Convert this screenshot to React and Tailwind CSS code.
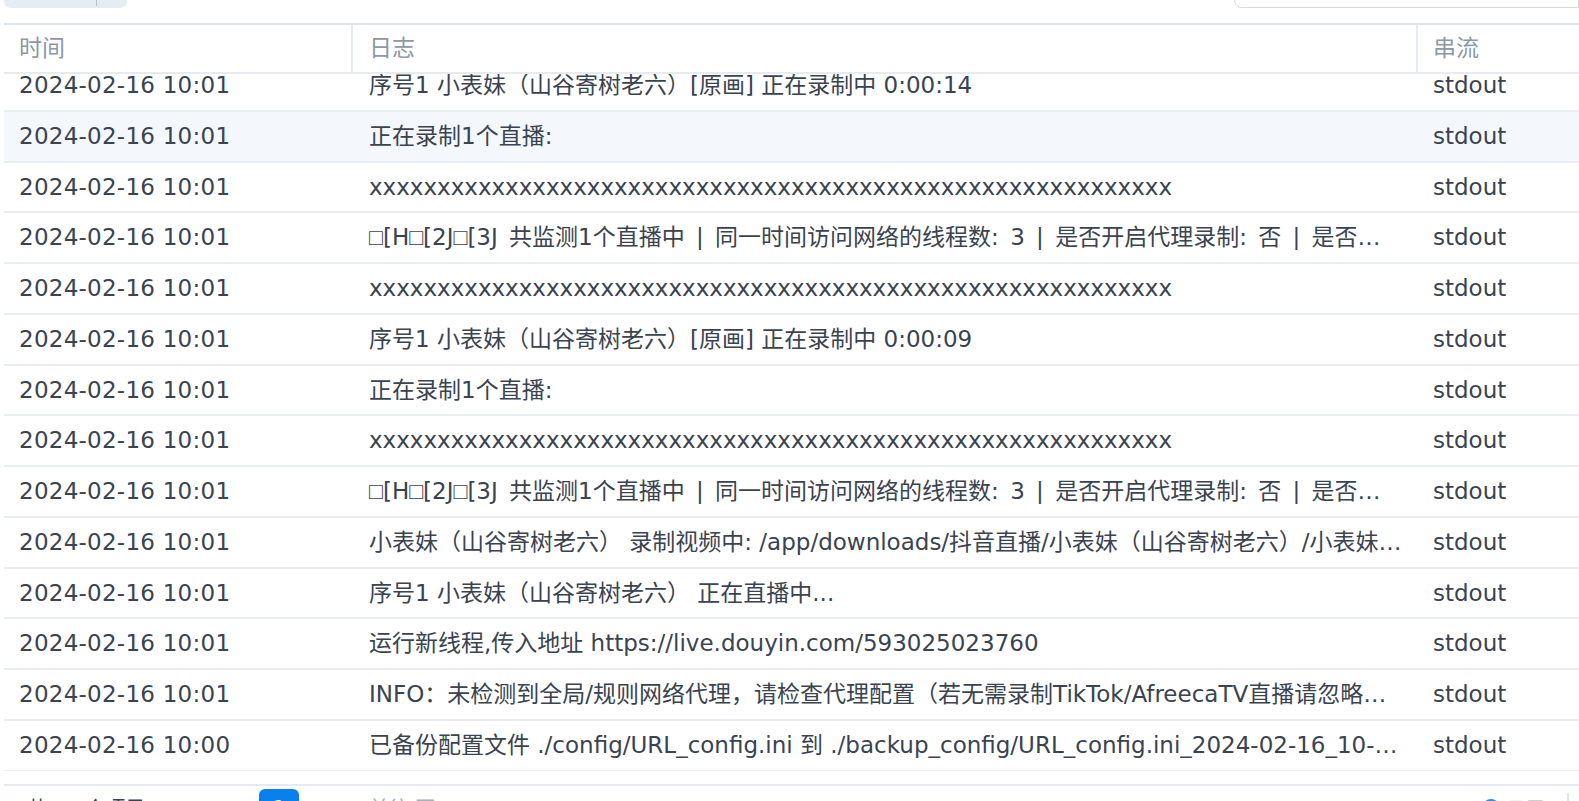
import React from 'react';

const xs = 'x'.repeat(59);

const rows = [
    { time: '2024-02-16 10:01', log: '序号1 小表妹（山谷寄树老六）[原画] 正在录制中 0:00:14' },
    { time: '2024-02-16 10:01', log: '正在录制1个直播:', hover: true },
    { time: '2024-02-16 10:01', log: xs },
    { time: '2024-02-16 10:01', log: '共监测1个直播中 | 同一时间访问网络的线程数: 3 | 是否开启代理录制: 否 | 是否开启推送通知: 否 | 录制分段开启: 否', esc: true },
    { time: '2024-02-16 10:01', log: xs },
    { time: '2024-02-16 10:01', log: '序号1 小表妹（山谷寄树老六）[原画] 正在录制中 0:00:09' },
    { time: '2024-02-16 10:01', log: '正在录制1个直播:' },
    { time: '2024-02-16 10:01', log: xs },
    { time: '2024-02-16 10:01', log: '共监测1个直播中 | 同一时间访问网络的线程数: 3 | 是否开启代理录制: 否 | 是否开启推送通知: 否 | 录制分段开启: 否', esc: true },
    { time: '2024-02-16 10:01', log: '小表妹（山谷寄树老六） 录制视频中: /app/downloads/抖音直播/小表妹（山谷寄树老六）/小表妹（山谷寄树老六）_2024-02-16_10-01-05.ts' },
    { time: '2024-02-16 10:01', log: '序号1 小表妹（山谷寄树老六） 正在直播中...' },
    { time: '2024-02-16 10:01', log: '运行新线程,传入地址 https://live.douyin.com/593025023760' },
    { time: '2024-02-16 10:01', log: 'INFO：未检测到全局/规则网络代理，请检查代理配置（若无需录制TikTok/AfreecaTV直播请忽略此条提示）' },
    { time: '2024-02-16 10:00', log: '已备份配置文件 ./config/URL_config.ini 到 ./backup_config/URL_config.ini_2024-02-16_10-00-58' },
];

const Box = () => <span className="font-['Liberation_Sans',sans-serif]">□</span>;

const EscPrefix = () => (
    <>
        <Box />[H<Box />[2J<Box />[3J{' '}
    </>
);

const App = () => {
    return (
        <div className="h-[801px] w-[1579px] overflow-hidden bg-white text-[23px] text-[#3a4350] font-['DejaVu_Sans','Noto_Sans_CJK_SC',sans-serif]">
            {/* toolbar, scrolled mostly out of view */}
            <div className="-mt-[24px] flex h-[32px] items-stretch justify-between pl-[4px]">
                <div className="flex w-[123px] rounded-b-[7px] bg-[#e6ecf4]">
                    <div className="w-[93px] border-r border-[#b9c3cf] mt-[18px] mb-[2px]"></div>
                    <div className="flex-1"></div>
                </div>
                <div className="w-[345px] rounded-bl-[8px] border border-[#d3dbe5] bg-white"></div>
            </div>

            <div className="mt-[15px] ml-[4px] border-t-2 border-[#dfe5ec]">
                {/* header */}
                <div className="flex h-[49px] border-b-2 border-[#e6ebf1] text-[#8c98a6]">
                    <div className="flex w-[349px] items-center border-r-2 border-[#e6ebf1] px-[15px]">时间</div>
                    <div className="flex w-[1065px] items-center border-r-2 border-[#e6ebf1] px-[16px]">日志</div>
                    <div className="flex flex-1 items-center px-[15px]">串流</div>
                </div>

                {/* body */}
                <div className="h-[697px] overflow-hidden">
                    <div className="-mt-[13px]">
                        {rows.map((r, i) => (
                            <div
                                key={i}
                                className={`flex h-[50.75px] items-center border-b-2 border-[#e9edf2] ${r.hover ? 'bg-[#f4f8fd]' : ''}`}
                            >
                                <div className="w-[349px] shrink-0 px-[15px] whitespace-nowrap tracking-[0.25px]">{r.time}</div>
                                <div className={`w-[1065px] shrink-0 px-[16px] truncate ${r.esc ? '[word-spacing:4px]' : ''}`}>
                                    {r.esc && <EscPrefix />}
                                    {r.log}
                                </div>
                                <div className="flex-1 px-[15px]">stdout</div>
                            </div>
                        ))}
                    </div>
                </div>

                {/* pagination footer */}
                <div className="mt-[13px] flex h-[40px] items-start border-t-2 border-[#e6ebf1] text-[20px] leading-[20px]">
                    <div className="mt-[13px] w-[255px] pl-[23px]">共 14 个项目</div>
                    <div className="mt-[3px] h-[36px] w-[40px] rounded-[6px] bg-[#0a80ec] pt-[8px] text-center text-white">1</div>
                    <div className="mt-[13px] pl-[70px] text-[#a6b0bb]">前往 页</div>
                    <div className="flex-1"></div>
                    <div className="mt-[13px] h-[20px] w-[18px] rounded-full border-2 border-[#2f8fe6]"></div>
                    <div className="ml-[9px] mt-[14px] h-[20px] w-[14px] rounded-[3px] bg-[#eef1f5]"></div>
                    <div className="ml-[4px] mt-[14px] h-[20px] w-[17px] rounded-[3px] bg-[#c9ced6]"></div>
                    <div className="ml-[23px] mr-[10px] mt-[7px] h-[30px] w-[2px] bg-[#dfe5ec]"></div>
                </div>
            </div>
        </div>
    );
};

export default App;
